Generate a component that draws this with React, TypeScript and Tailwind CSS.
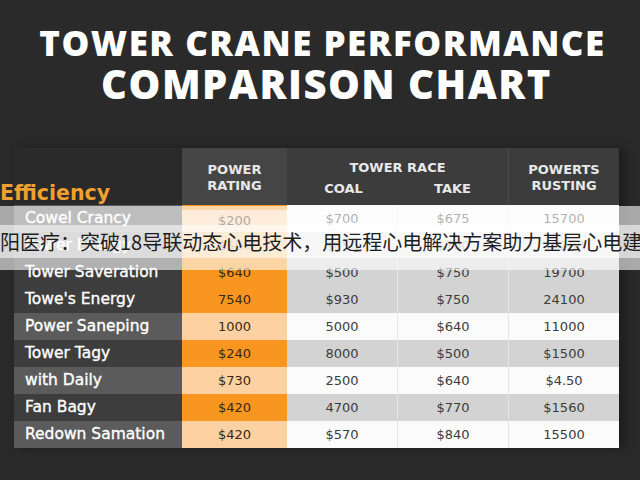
import React from "react";

type Row = {
  label: string;
  power: string;
  coal: string;
  take: string;
  rust: string;
  light: boolean;
};

const rows: Row[] = [
  { label: "Cowel Crancy", power: "$200", coal: "$700", take: "$675", rust: "15700", light: true },
  { label: "Power Energy", power: "$500", coal: "$850", take: "$700", rust: "18200", light: false },
  { label: "Tower Saveration", power: "$640", coal: "$500", take: "$750", rust: "19700", light: false },
  { label: "Towe's Energy", power: "7540", coal: "$930", take: "$750", rust: "24100", light: false },
  { label: "Power Saneping", power: "1000", coal: "5000", take: "$640", rust: "11000", light: true },
  { label: "Tower Tagy", power: "$240", coal: "8000", take: "$500", rust: "$1500", light: false },
  { label: "with Daily", power: "$730", coal: "2500", take: "$640", rust: "$4.50", light: true },
  { label: "Fan Bagy", power: "$420", coal: "4700", take: "$770", rust: "$1560", light: false },
  { label: "Redown Samation", power: "$420", coal: "$570", take: "$840", rust: "15500", light: true },
];

export default function App() {
  return (
    <div className="relative h-[480px] w-[640px] overflow-hidden bg-[#2a2a2a] font-['DejaVu_Sans',sans-serif]">
      {/* title */}
      <div className="pl-[5px] pt-[23px] text-center font-['Open_Sans',sans-serif] font-extrabold tracking-[1.5px] text-white">
        <div className="text-[35px] leading-[40px]">TOWER CRANE PERFORMANCE</div>
        <div className="pl-[8px] text-[40px] leading-[42px]">COMPARISON CHART</div>
      </div>

      {/* table */}
      <div className="ml-[14px] mt-[43px] w-[605px] shadow-[6px_0_10px_rgba(0,0,0,0.35)]">
        <div className="flex h-[57px]">
          <div className="-ml-[14px] flex w-[182px] items-end">
            <span className="text-[20.5px] font-bold leading-[24px] text-[#efa02f]">Efficiency</span>
          </div>
          <div className="flex flex-1 bg-[#3c3c3c] text-[13px] font-bold leading-[16px] text-[#e8e8e8]">
            <div className="flex w-[105px] flex-col items-center justify-center bg-[#454545] pt-[2px]">
              <span>POWER</span>
              <span>RATING</span>
            </div>
            <div className="flex w-[221px] flex-col pt-[12px]">
              <div className="text-center">TOWER RACE</div>
              <div className="mt-[5px] flex">
                <span className="w-[110px] pl-[3px] text-center">COAL</span>
                <span className="w-[111px] text-center">TAKE</span>
              </div>
            </div>
            <div className="flex w-[111px] flex-col items-center justify-center border-l border-[#4a4a4a] pt-[2px]">
              <span>POWERTS</span>
              <span>RUSTING</span>
            </div>
          </div>
        </div>

        <div className="grid grid-cols-[168px_105px_110px_111px_111px] text-[13px]">
          {rows.map((r, i) => (
            <React.Fragment key={r.label}>
              <div
                className={`flex h-[27px] items-center pl-[11px] text-[15.5px] text-white [-webkit-text-stroke:0.35px_white] ${
                  r.light ? "bg-[#5b5b5b]" : "bg-[#3d3d3d]"
                }`}
              >
                {r.label}
              </div>
              <div
                className={`flex h-[27px] items-center justify-center text-[#3a2814] ${
                  r.light ? "bg-[#fdd1a2]" : "bg-[#f8961f]"
                } ${i === 0 ? "border-t-[5px] border-[#f8961f]" : ""}`}
              >
                {r.power}
              </div>
              <div
                className={`flex h-[27px] items-center justify-center text-[#3c3c3c] ${
                  r.light ? "bg-[#fbfbfb]" : "bg-[#d3d3d3]"
                }`}
              >
                {r.coal}
              </div>
              <div
                className={`flex h-[27px] items-center justify-center border-l border-[#e6e6e6] text-[#3c3c3c] ${
                  r.light ? "bg-[#fbfbfb]" : "bg-[#d3d3d3]"
                }`}
              >
                {r.take}
              </div>
              <div
                className={`flex h-[27px] items-center justify-center border-l border-[#e6e6e6] text-[#3c3c3c] ${
                  r.light ? "bg-[#fbfbfb]" : "bg-[#d3d3d3]"
                }`}
              >
                {r.rust}
              </div>
            </React.Fragment>
          ))}
        </div>
      </div>

      {/* caption banner */}
      <div className="absolute left-0 top-[206px] h-[64px] w-full bg-white/60">
        <div className="mt-[19px] flex h-[33px] items-center overflow-hidden whitespace-nowrap bg-white/55 font-['Noto_Sans_CJK_SC',sans-serif] text-[20px] text-[#1e1e1e]">
          阳医疗：突破18导联动态心电技术，用远程心电解决方案助力基层心电建设
        </div>
      </div>
    </div>
  );
}
